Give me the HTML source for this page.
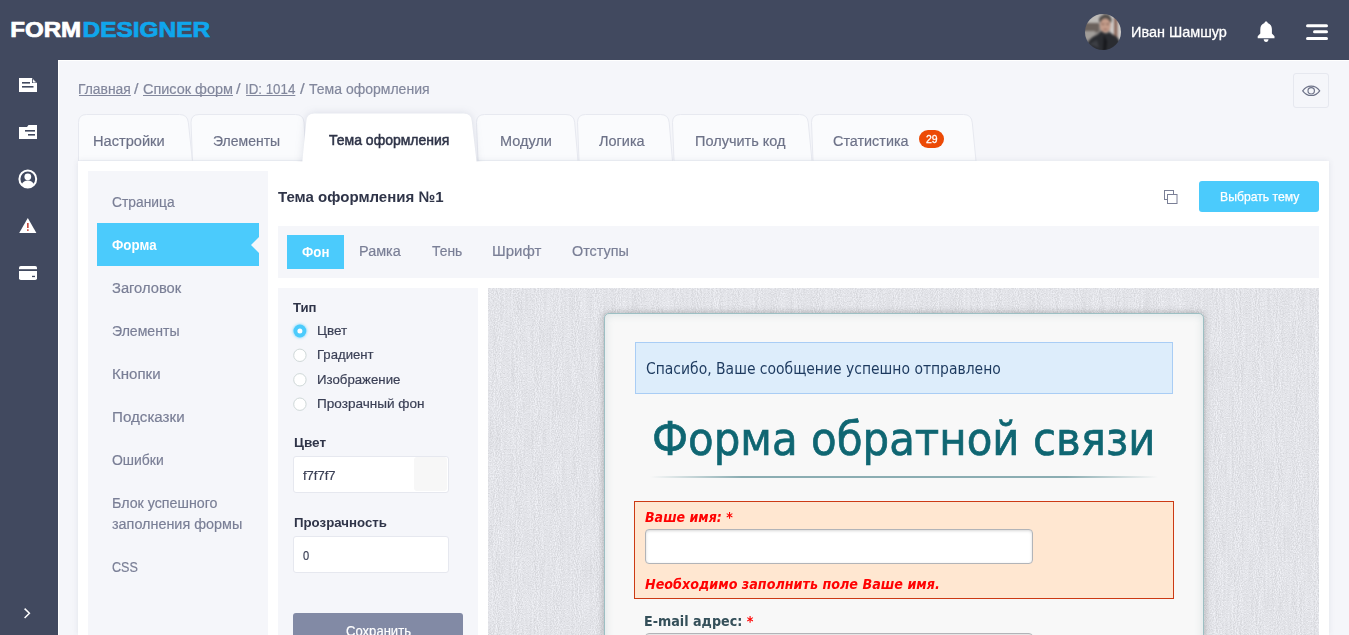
<!DOCTYPE html>
<html lang="ru"><head><meta charset="utf-8"><title>Тема оформления</title>
<style>
*{box-sizing:border-box;margin:0;padding:0}
html,body{width:1349px;height:635px;overflow:hidden;background:#f5f6fa;font-family:"Liberation Sans",sans-serif}
.a{position:absolute}
.t{position:absolute;white-space:nowrap;display:block;transform-origin:0 50%}
.t u{text-decoration:underline;text-underline-offset:1.2px;text-decoration-thickness:1px;text-decoration-skip-ink:none}
#hdr{left:0;top:0;width:1349px;height:60px;background:#41495f}
#side{left:0;top:60px;width:58px;height:575px;background:#41495f}
#content{left:58px;top:60px;width:1291px;height:575px;background:#f5f6fa;border-left:1px solid #fff;border-top:1px solid #fff}


#panel{left:78px;top:161px;width:1251px;height:474px;background:#fff;box-shadow:0 0 6px rgba(60,70,100,.10)}
#lmenu{left:88px;top:171px;width:180px;height:464px;background:#f5f6fa}
#lact{left:97px;top:223px;width:162px;height:43px;background:#4bcbfc}
#lact:after{content:"";position:absolute;right:0;top:14px;border:8px solid transparent;border-right:8px solid #f5f6fa;border-left:none}
#btn{left:1199px;top:181px;width:120px;height:31px;background:#4bcbfc;border-radius:3px}
#subbar{left:278px;top:226px;width:1041px;height:52px;background:#f5f6fa}
#subact{left:287px;top:235px;width:57px;height:34px;background:#4bcbfc}
#setp{left:278px;top:288px;width:200px;height:347px;background:#f5f6fa}
#prev{left:488px;top:288px;width:831px;height:347px;background:#e4e5ea;overflow:hidden}
.radio{position:absolute;left:293px;width:13px;height:13px;border-radius:50%;background:#fff;border:1px solid #cfd6d6}
.radio.on{border:4px solid #4bcbfc;box-shadow:0 0 3px #4bcbfc}
.inp{position:absolute;left:293px;width:156px;height:37px;background:#fff;border:1px solid #e6e8ef;border-radius:3px}
#save{left:293px;top:613px;width:170px;height:40px;background:#828aa5;border-radius:3px}
#form{left:604px;top:313px;width:600px;height:340px;background:#f8f8f8;border:1px solid #9cbfc3;border-radius:5px;box-shadow:0 0 7px rgba(0,0,0,.28), inset 0 0 9px rgba(150,178,180,.32)}
#succ{left:635px;top:342px;width:538px;height:52px;background:#ddedfb;border:1px solid #a9cdf5}
#hr{left:650px;top:476px;width:508px;height:2px;background:linear-gradient(90deg,rgba(120,160,166,0),rgba(120,160,166,.85) 18%,rgba(120,160,166,.85) 82%,rgba(120,160,166,0))}
#err{left:634px;top:501px;width:540px;height:98px;background:#ffe7d1;border:1px solid #cc3a14}
.finp{position:absolute;left:645px;width:387.5px;height:34.5px;background:#fff;border:1px solid #b2b4b8;border-radius:4px;box-shadow:inset 0 1px 3px rgba(0,0,0,.16)}
#badge{left:919px;top:130px;width:25px;height:18px;border-radius:9px;background:#ec4a06}
#eye{left:1293px;top:73px;width:36px;height:35px;border:1px solid #e6e8ef;border-radius:3px;background:#f5f6fa}

</style></head>
<body>
<div id="hdr" class="a"></div>
<div id="side" class="a"></div>
<div id="content" class="a"></div>
<svg class="a" style="left:0;top:0" width="230" height="60"><text x="10.2" y="36.7" font-family="Liberation Sans, sans-serif" font-weight="700" font-size="21.4" fill="#fff" stroke="#fff" stroke-width="0.7" textLength="71" lengthAdjust="spacingAndGlyphs">FORM</text><text x="82.6" y="36.7" font-family="Liberation Sans, sans-serif" font-weight="700" font-size="21.4" fill="#0fa6ec" stroke="#0fa6ec" stroke-width="0.7" textLength="127.6" lengthAdjust="spacingAndGlyphs">DESIGNER</text></svg>
<div id="eye" class="a"></div>
<svg class="a" style="left:0;top:100px" width="1349" height="62" viewBox="0 100 1349 62"><path d="M78.5 161L78.5 122.5Q78.5 114.5 86.5 114.5L179.5 114.5Q187.5 114.5 188.36 122.5L192.5 161Z" fill="#fafbfd" stroke="#e7e9f0" stroke-width="1"/><path d="M192.5 161L191 122.5Q191 114.5 199 114.5L295.5 114.5Q303.5 114.5 304.016 122.5L306.5 161Z" fill="#fafbfd" stroke="#e7e9f0" stroke-width="1"/><path d="M478 161L476.5 122.5Q476.5 114.5 484.5 114.5L566 114.5Q574 114.5 574.688 122.5L578 161Z" fill="#fafbfd" stroke="#e7e9f0" stroke-width="1"/><path d="M579 161L577.5 122.5Q577.5 114.5 585.5 114.5L660.5 114.5Q668.5 114.5 669.188 122.5L672.5 161Z" fill="#fafbfd" stroke="#e7e9f0" stroke-width="1"/><path d="M674 161L672.5 122.5Q672.5 114.5 680.5 114.5L799.5 114.5Q807.5 114.5 808.274 122.5L812 161Z" fill="#fafbfd" stroke="#e7e9f0" stroke-width="1"/><path d="M813 161L811.5 122.5Q811.5 114.5 819.5 114.5L963.5 114.5Q971.5 114.5 972.274 122.5L976 161Z" fill="#fafbfd" stroke="#e7e9f0" stroke-width="1"/></svg>
<div id="panel" class="a"></div>
<svg class="a" style="left:0;top:100px" width="1349" height="62" viewBox="0 100 1349 62"><path d="M301.5 170L306.3 121.5Q306.5 113.5 314.5 113.5L463.5 113.5Q471.5 113.5 471.8 121.5L477.5 170Z" fill="#fff" style="filter:drop-shadow(0 0 4px rgba(70,80,120,.16))"/></svg>
<div id="badge" class="a"></div>
<div id="lmenu" class="a"></div>
<div id="lact" class="a"></div>
<div id="btn" class="a"></div>
<div id="subbar" class="a"></div>
<div id="subact" class="a"></div>
<div id="setp" class="a"></div>
<div id="prev" class="a"><svg width="831" height="347" style="display:block"><filter id="tx" color-interpolation-filters="sRGB" x="0" y="0" width="100%" height="100%"><feTurbulence type="fractalNoise" baseFrequency="0.95 0.75" numOctaves="1" seed="4" result="a"/><feTurbulence type="fractalNoise" baseFrequency="0.5 0.03" numOctaves="1" seed="9" result="b"/><feComposite in="a" in2="b" operator="arithmetic" k1="0" k2="0.75" k3="0.25" k4="0"/><feColorMatrix type="matrix" values="0.28 0 0 0 0.748  0.28 0 0 0 0.752  0.28 0 0 0 0.771  0 0 0 0 1"/></filter><rect width="831" height="347" filter="url(#tx)"/></svg></div>
<svg class="a" style="left:285px;top:315px" width="30" height="100" viewBox="285 315 30 100">
  <circle cx="299.9" cy="331" r="6.400" fill="#4bcbfc" style="filter:drop-shadow(0 0 1.500px rgba(75,203,252,.9))"/>
  <circle cx="299.9" cy="331" r="2.500" fill="#fff"/>
  <circle cx="299.9" cy="355.300" r="6.200" fill="#fff" stroke="#cfd8d8" stroke-width="1"/>
  <circle cx="299.9" cy="379.800" r="6.200" fill="#fff" stroke="#cfd8d8" stroke-width="1"/>
  <circle cx="299.9" cy="404.200" r="6.200" fill="#fff" stroke="#cfd8d8" stroke-width="1"/>
</svg>
<div class="inp" style="top:456px"></div>
<div class="a" style="left:414px;top:457px;width:33px;height:34px;background:#f7f7f7;border-radius:3px"></div>
<div class="inp" style="top:536px"></div>
<div id="save" class="a"></div>
<div id="form" class="a"></div>
<div id="succ" class="a"></div>
<div id="hr" class="a"></div>
<div id="err" class="a"></div>
<div class="finp" style="top:529px"></div>
<div class="finp" style="top:633px"></div>
<!-- sidebar icons -->
<svg class="a" style="left:0;top:60px" width="58" height="575" viewBox="0 60 58 575">
  <!-- doc -->
  <path d="M19 78h13l5 5v9H19z" fill="#fff"/>
  <path d="M32 78v5h5z" fill="#41495f"/><path d="M32.8 79.2l3.2 3.2h-3.2z" fill="#fff"/>
  <rect x="22" y="82" width="8" height="1.6" fill="#41495f"/><rect x="22" y="86" width="11.5" height="1.6" fill="#41495f"/>
  <!-- folder -->
  <path d="M19 127h8l1.5-2H37v14H19z" fill="#fff"/>
  <rect x="25" y="130" width="10" height="1.6" fill="#41495f"/><rect x="28" y="134" width="7" height="1.6" fill="#41495f"/>
  <!-- user -->
  <circle cx="27.8" cy="179" r="8.4" fill="none" stroke="#fff" stroke-width="2"/>
  <circle cx="27.8" cy="176.8" r="3.4" fill="#fff"/>
  <path d="M21.6 184.6c1.2-3 3.4-4.2 6.2-4.2s5 1.200 6.200 4.200c-1.600 1.800-3.800 2.800-6.200 2.800s-4.600-1-6.200-2.800z" fill="#fff"/>
  <!-- warn -->
  <path d="M27.800 218l8.600 15H19.200z" fill="#fff"/>
  <rect x="27.100" y="223" width="1.500" height="5" fill="#c0392b"/><rect x="27.100" y="229.300" width="1.500" height="1.600" fill="#c0392b"/>
  <!-- card -->
  <rect x="19" y="266" width="18" height="14" rx="1.800" fill="#fff"/>
  <rect x="19" y="269.200" width="18" height="1.800" fill="#41495f"/>
  <rect x="32" y="275.800" width="3" height="1.300" fill="#41495f"/>
  <!-- chevron -->
  <path d="M24.600 608.600l4.800 4.700-4.800 4.700" fill="none" stroke="#fff" stroke-width="1.500"/>
</svg>
<!-- header icons -->
<svg class="a" style="left:1080px;top:0" width="269" height="60" viewBox="1080 0 269 60">
  <defs><clipPath id="av"><circle cx="1103" cy="32" r="18"/></clipPath></defs>
  <g clip-path="url(#av)"><g style="filter:blur(.8px)">
    <rect x="1083" y="12" width="40" height="40" fill="#8f8b88"/>
    <rect x="1083" y="12" width="20" height="12" fill="#bdbab7"/>
    <rect x="1083" y="23" width="16" height="9" fill="#6b625d"/>
    <rect x="1083" y="31" width="12" height="8" fill="#a19d99"/>
    <rect x="1110" y="12" width="13" height="32" fill="#cfccca"/>
    <rect x="1114" y="17" width="3.5" height="24" fill="#8d6b5e"/>
    <ellipse cx="1105.3" cy="20" rx="6.4" ry="5.2" fill="#4f4a46"/>
    <ellipse cx="1105.3" cy="25.5" rx="5.5" ry="7.2" fill="#c49c8a"/>
    <rect x="1101.5" y="23.6" width="2.6" height="1" fill="#6a4f45"/><rect x="1106.4" y="23.6" width="2.6" height="1" fill="#6a4f45"/>
    <rect x="1103.6" y="29" width="3.6" height="0.9" fill="#8a5d52"/>
    <path d="M1086 52c0-9 4-15 11-17l4.500-4c2 2.500 5.500 3.500 8 1l4 3c5 2 8 7 8 17z" fill="#2a2c31"/>
    <path d="M1104 35l3 6-1 11h-3z" fill="#17181c"/>
    <path d="M1089 44l8-4 2 8z" fill="#3d3f45"/>
  </g></g>
  <!-- bell -->
  <path d="M1266.100 21.500c1 0 1.600.7 1.600 1.600 2.700.9 4.200 3.200 4.200 6.200v4.300l2.600 2.600v2h-16.800v-2l2.600-2.600v-4.300c0-3 1.500-5.300 4.200-6.200 0-.9.600-1.600 1.600-1.600z" fill="#fff"/>
  <path d="M1263.700 39.300h4.800c0 1.500-1 2.700-2.400 2.700s-2.400-1.200-2.400-2.700z" fill="#fff"/>
  <!-- menu -->
  <rect x="1306" y="24.200" width="22" height="3" rx="1.500" fill="#fff"/>
  <rect x="1313" y="30.200" width="15" height="3" rx="1.500" fill="#fff"/>
  <rect x="1306" y="36.900" width="22" height="3" rx="1.500" fill="#fff"/>
</svg>
<!-- eye -->
<svg class="a" style="left:1294px;top:73px" width="35" height="35" viewBox="1294 73 35 35">
  <path d="M1302.700 90.800c2.200-3.100 5.100-4.700 8.500-4.700s6.300 1.600 8.500 4.700c-2.200 3.100-5.100 4.700-8.500 4.700s-6.300-1.600-8.500-4.700z" fill="none" stroke="#6d7288" stroke-width="1.15"/>
  <circle cx="1311.200" cy="90.800" r="3.200" fill="none" stroke="#6d7288" stroke-width="1.15"/>
</svg>
<!-- copy -->
<svg class="a" style="left:1160px;top:186px" width="22" height="22" viewBox="1160 186 22 22">
  <rect x="1164.500" y="190.500" width="9" height="9" fill="#fff" stroke="#7a7f96" stroke-width="1"/>
  <rect x="1167.500" y="194.500" width="9.500" height="9" fill="#fff" stroke="#7a7f96" stroke-width="1"/>
</svg>

<span class="t" style="left:1130.77px;top:20.83px;font:normal 400 15.5px/22px 'Liberation Sans', sans-serif;color:#ffffff;transform:scaleX(0.9320);-webkit-text-stroke:0.3px #fff;">Иван Шамшур</span>
<span class="t" style="left:78.20px;top:78.13px;font:normal 400 15.5px/22px 'Liberation Sans', sans-serif;color:#82879c;transform:scaleX(0.8958);clip-path:inset(-5px -5px -5px 1.1px);-webkit-text-stroke-width:0.2px;"><u>Главная</u></span>
<span class="t" style="left:134.20px;top:78.13px;font:normal 400 15.5px/22px 'Liberation Sans', sans-serif;color:#82879c;transform:scaleX(1.0400);-webkit-text-stroke-width:0.2px;">/</span>
<span class="t" style="left:143.10px;top:78.13px;font:normal 400 15.5px/22px 'Liberation Sans', sans-serif;color:#82879c;transform:scaleX(0.9325);-webkit-text-stroke-width:0.2px;"><u>Список форм</u></span>
<span class="t" style="left:236.20px;top:78.13px;font:normal 400 15.5px/22px 'Liberation Sans', sans-serif;color:#82879c;transform:scaleX(1.0600);-webkit-text-stroke-width:0.2px;">/</span>
<span class="t" style="left:245.04px;top:78.13px;font:normal 400 15.5px/22px 'Liberation Sans', sans-serif;color:#82879c;transform:scaleX(0.8590);clip-path:inset(-5px -5px -5px 1.3px);-webkit-text-stroke-width:0.2px;"><u>ID: 1014</u></span>
<span class="t" style="left:299.50px;top:78.13px;font:normal 400 15.5px/22px 'Liberation Sans', sans-serif;color:#82879c;transform:scaleX(1.0800);-webkit-text-stroke-width:0.2px;">/</span>
<span class="t" style="left:309.40px;top:78.13px;font:normal 400 15.5px/22px 'Liberation Sans', sans-serif;color:#82879c;transform:scaleX(0.9041);-webkit-text-stroke-width:0.2px;">Тема оформления</span>
<span class="t" style="left:93.36px;top:129.93px;font:normal 400 15.5px/22px 'Liberation Sans', sans-serif;color:#6d7288;transform:scaleX(0.9429);-webkit-text-stroke-width:0.2px;">Настройки</span>
<span class="t" style="left:213.00px;top:129.93px;font:normal 400 15.5px/22px 'Liberation Sans', sans-serif;color:#6d7288;transform:scaleX(0.9026);-webkit-text-stroke-width:0.2px;">Элементы</span>
<span class="t" style="left:329.10px;top:129.03px;font:normal 400 15.5px/22px 'Liberation Sans', sans-serif;color:#2f3448;transform:scaleX(0.9033);-webkit-text-stroke:0.55px #2f3448;">Тема оформления</span>
<span class="t" style="left:499.66px;top:129.93px;font:normal 400 15.5px/22px 'Liberation Sans', sans-serif;color:#6d7288;transform:scaleX(0.9357);-webkit-text-stroke-width:0.2px;">Модули</span>
<span class="t" style="left:599.00px;top:129.93px;font:normal 400 15.5px/22px 'Liberation Sans', sans-serif;color:#6d7288;transform:scaleX(0.9345);-webkit-text-stroke-width:0.2px;">Логика</span>
<span class="t" style="left:694.56px;top:129.93px;font:normal 400 15.5px/22px 'Liberation Sans', sans-serif;color:#6d7288;transform:scaleX(0.9356);-webkit-text-stroke-width:0.2px;">Получить код</span>
<span class="t" style="left:832.70px;top:129.93px;font:normal 400 15.5px/22px 'Liberation Sans', sans-serif;color:#6d7288;transform:scaleX(0.9280);-webkit-text-stroke-width:0.2px;">Статистика</span>
<span class="t" style="left:925.50px;top:131.59px;font:normal 400 11px/15px 'Liberation Sans', sans-serif;color:#ffffff;transform:scaleX(0.9490);-webkit-text-stroke:0.3px #fff;">29</span>
<span class="t" style="left:112.30px;top:190.63px;font:normal 400 15.5px/22px 'Liberation Sans', sans-serif;color:#7a7f96;transform:scaleX(0.8906);-webkit-text-stroke-width:0.2px;">Страница</span>
<span class="t" style="left:112.30px;top:233.63px;font:normal 700 15.5px/22px 'Liberation Sans', sans-serif;color:#ffffff;transform:scaleX(0.8598);">Форма</span>
<span class="t" style="left:112.30px;top:276.63px;font:normal 400 15.5px/22px 'Liberation Sans', sans-serif;color:#7a7f96;transform:scaleX(0.9495);-webkit-text-stroke-width:0.2px;">Заголовок</span>
<span class="t" style="left:112.30px;top:319.63px;font:normal 400 15.5px/22px 'Liberation Sans', sans-serif;color:#7a7f96;transform:scaleX(0.9080);-webkit-text-stroke-width:0.2px;">Элементы</span>
<span class="t" style="left:112.13px;top:362.63px;font:normal 400 15.5px/22px 'Liberation Sans', sans-serif;color:#7a7f96;transform:scaleX(0.9714);-webkit-text-stroke-width:0.2px;">Кнопки</span>
<span class="t" style="left:112.12px;top:405.63px;font:normal 400 15.5px/22px 'Liberation Sans', sans-serif;color:#7a7f96;transform:scaleX(0.9770);-webkit-text-stroke-width:0.2px;">Подсказки</span>
<span class="t" style="left:112.30px;top:448.63px;font:normal 400 15.5px/22px 'Liberation Sans', sans-serif;color:#7a7f96;transform:scaleX(0.8995);-webkit-text-stroke-width:0.2px;">Ошибки</span>
<span class="t" style="left:112.28px;top:491.63px;font:normal 400 15.5px/22px 'Liberation Sans', sans-serif;color:#7a7f96;transform:scaleX(0.9188);-webkit-text-stroke-width:0.2px;">Блок успешного</span>
<span class="t" style="left:112.30px;top:512.63px;font:normal 400 15.5px/22px 'Liberation Sans', sans-serif;color:#7a7f96;transform:scaleX(0.9280);-webkit-text-stroke-width:0.2px;">заполнения формы</span>
<span class="t" style="left:112.30px;top:555.63px;font:normal 400 15.5px/22px 'Liberation Sans', sans-serif;color:#7a7f96;transform:scaleX(0.8119);-webkit-text-stroke-width:0.2px;">CSS</span>
<span class="t" style="left:278.40px;top:185.93px;font:normal 700 15.5px/22px 'Liberation Sans', sans-serif;color:#2f3448;transform:scaleX(0.9702);">Тема оформления №1</span>
<span class="t" style="left:1219.50px;top:187.32px;font:normal 400 13.5px/19px 'Liberation Sans', sans-serif;color:#ffffff;transform:scaleX(0.9047);-webkit-text-stroke:0.25px #fff;">Выбрать тему</span>
<span class="t" style="left:302.40px;top:241.58px;font:normal 700 14.5px/20px 'Liberation Sans', sans-serif;color:#ffffff;transform:scaleX(0.9133);">Фон</span>
<span class="t" style="left:359.07px;top:240.23px;font:normal 400 15.5px/22px 'Liberation Sans', sans-serif;color:#7a7f96;transform:scaleX(0.9294);-webkit-text-stroke-width:0.2px;">Рамка</span>
<span class="t" style="left:432.00px;top:240.23px;font:normal 400 15.5px/22px 'Liberation Sans', sans-serif;color:#7a7f96;transform:scaleX(0.8941);-webkit-text-stroke-width:0.2px;">Тень</span>
<span class="t" style="left:491.93px;top:240.23px;font:normal 400 15.5px/22px 'Liberation Sans', sans-serif;color:#7a7f96;transform:scaleX(0.9660);-webkit-text-stroke-width:0.2px;">Шрифт</span>
<span class="t" style="left:571.90px;top:240.23px;font:normal 400 15.5px/22px 'Liberation Sans', sans-serif;color:#7a7f96;transform:scaleX(0.9273);-webkit-text-stroke-width:0.2px;">Отступы</span>
<span class="t" style="left:293.40px;top:297.52px;font:normal 700 13.5px/19px 'Liberation Sans', sans-serif;color:#2f3448;transform:scaleX(0.9737);">Тип</span>
<span class="t" style="left:317.40px;top:320.72px;font:normal 400 13.5px/19px 'Liberation Sans', sans-serif;color:#3a3f55;transform:scaleX(1.0011);-webkit-text-stroke-width:0.2px;">Цвет</span>
<span class="t" style="left:317.43px;top:345.42px;font:normal 400 13.5px/19px 'Liberation Sans', sans-serif;color:#3a3f55;transform:scaleX(0.9728);-webkit-text-stroke-width:0.2px;">Градиент</span>
<span class="t" style="left:317.42px;top:369.72px;font:normal 400 13.5px/19px 'Liberation Sans', sans-serif;color:#3a3f55;transform:scaleX(0.9805);-webkit-text-stroke-width:0.2px;">Изображение</span>
<span class="t" style="left:317.40px;top:394.22px;font:normal 400 13.5px/19px 'Liberation Sans', sans-serif;color:#3a3f55;transform:scaleX(1.0050);-webkit-text-stroke-width:0.2px;">Прозрачный фон</span>
<span class="t" style="left:293.70px;top:432.62px;font:normal 700 13.5px/19px 'Liberation Sans', sans-serif;color:#2f3448;transform:scaleX(1.0027);">Цвет</span>
<span class="t" style="left:303.00px;top:466.77px;font:normal 400 12.5px/18px 'Liberation Sans', sans-serif;color:#3a3f55;transform:scaleX(1.0408);-webkit-text-stroke-width:0.2px;">f7f7f7</span>
<span class="t" style="left:293.90px;top:512.72px;font:normal 700 13.5px/19px 'Liberation Sans', sans-serif;color:#2f3448;transform:scaleX(0.9817);">Прозрачность</span>
<span class="t" style="left:303.40px;top:547.27px;font:normal 400 12.5px/18px 'Liberation Sans', sans-serif;color:#3a3f55;transform:scaleX(0.8857);-webkit-text-stroke-width:0.2px;">0</span>
<span class="t" style="left:345.80px;top:621.35px;font:normal 400 14px/20px 'Liberation Sans', sans-serif;color:#ffffff;transform:scaleX(0.9340);-webkit-text-stroke:0.2px #fff;">Сохранить</span>
<span class="t" style="left:645.90px;top:357.96px;font:normal 400 16px/22px 'DejaVu Sans', 'Liberation Sans', sans-serif;color:#1d3a5f;transform:scaleX(0.8705);">Спасибо, Ваше сообщение успешно отправлено</span>
<span class="t" style="left:652.28px;top:406.66px;font:normal 400 46px/64px 'DejaVu Sans', 'Liberation Sans', sans-serif;color:#0f6672;transform:scaleX(0.9116);-webkit-text-stroke:0.7px #0f6672;">Форма обратной связи</span>
<span class="t" style="left:645.00px;top:506.55px;font:italic 700 14px/20px 'DejaVu Sans', 'Liberation Sans', sans-serif;color:#ff0202;transform:scaleX(0.9014);">Ваше имя: *</span>
<span class="t" style="left:645.00px;top:573.55px;font:italic 700 14px/20px 'DejaVu Sans', 'Liberation Sans', sans-serif;color:#ff0202;transform:scaleX(0.9110);">Необходимо заполнить поле Ваше имя.</span>
<span class="t" style="left:644.09px;top:610.95px;font:normal 700 14px/20px 'DejaVu Sans', 'Liberation Sans', sans-serif;color:#35505a;transform:scaleX(0.9098);">E-mail адрес: <span style="color:#ff0202">*</span></span>
</body></html>
